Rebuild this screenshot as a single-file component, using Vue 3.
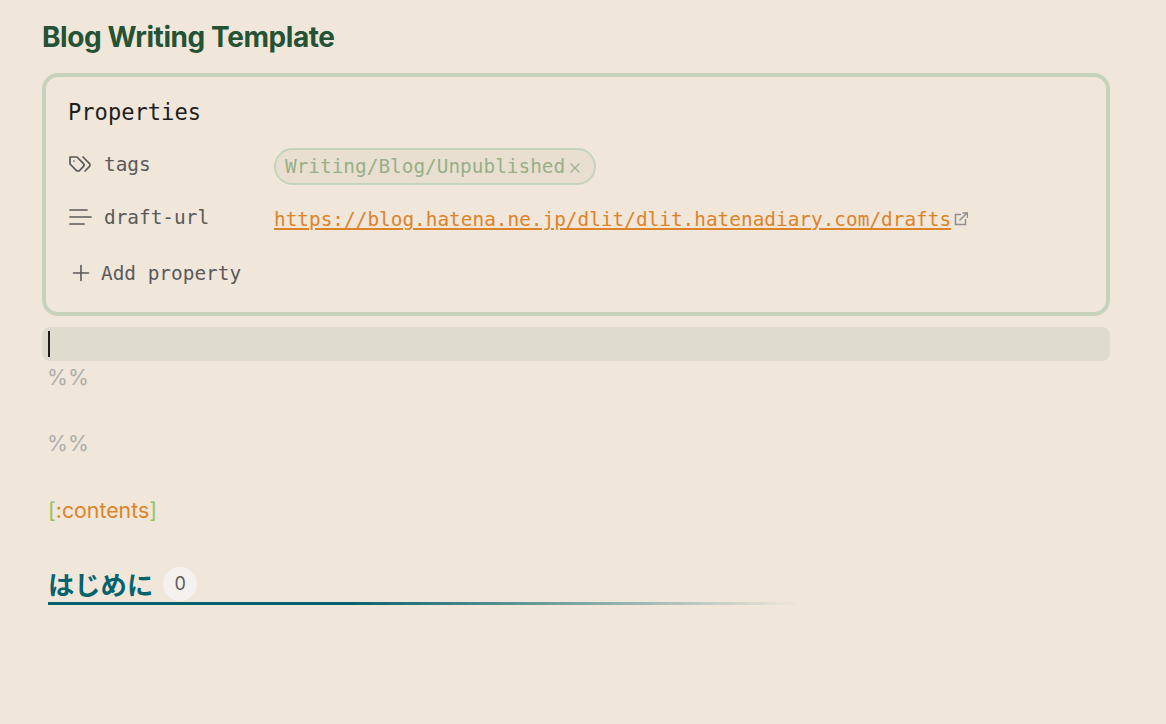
<template>
  <div class="page">
    <h1 class="title">Blog Writing Template</h1>
    <section class="props">
      <div class="props-head">Properties</div>
      <div class="prop">
        <div class="prop-key">
          <svg class="key-icon" viewBox="0 0 24 24" fill="none" stroke="currentColor" stroke-width="1.7" stroke-linecap="round" stroke-linejoin="round">
            <path d="M9 4H2v7l6.29 6.29c.94.94 2.48.94 3.42 0l3.58-3.58c.94-.94.94-2.48 0-3.42L9 4Z" />
            <path d="M6 8.01V8" />
            <path d="m15 4 6.3 6.3a2.4 2.4 0 0 1 0 3.4L17 18" />
          </svg>
          <span>tags</span>
        </div>
        <div class="pill">
          <span>Writing/Blog/Unpublished</span>
          <svg class="pill-x" viewBox="0 0 12 12" fill="none" stroke="currentColor" stroke-width="1.1">
            <path d="M1.5 1.5l9 9M10.5 1.5l-9 9" />
          </svg>
        </div>
      </div>
      <div class="prop">
        <div class="prop-key">
          <svg class="key-icon" viewBox="0 0 24 24" fill="none" stroke="currentColor" stroke-width="1.7" stroke-linecap="round">
            <path d="M2 4h17M2 11h21M2 18h14" />
          </svg>
          <span>draft-url</span>
        </div>
        <a class="url" href="#">https://blog.hatena.ne.jp/dlit/dlit.hatenadiary.com/drafts</a>
        <svg class="ext" viewBox="0 0 14 14" fill="none" stroke="currentColor" stroke-width="1.5">
          <path d="M7 2.5H1.5v10h10V7" />
          <path d="M5.5 8.5 12.5 1.5M8.5 1h5v5" />
        </svg>
      </div>
      <div class="add">
        <svg class="add-icon" viewBox="0 0 18 18" fill="none" stroke="currentColor" stroke-width="1.6" stroke-linecap="round">
          <path d="M9 1.5v15M1.5 9h15" />
        </svg>
        <span>Add property</span>
      </div>
    </section>
    <div class="active-line"><span class="caret"></span></div>
    <div class="line comment">%%</div>
    <div class="line empty"></div>
    <div class="line comment">%%</div>
    <div class="line empty"></div>
    <div class="line"><span class="bracket">[</span><span class="orange">:contents</span><span class="bracket">]</span></div>
    <div class="line empty"></div>
    <div class="heading">
      <span class="heading-text">はじめに</span>
      <span class="badge">0</span>
    </div>
  </div>
</template>

<script setup>
</script>

<style>
body {
  margin: 0;
  background: #f0e6da;
}
</style>

<style scoped>
.page {
  box-sizing: border-box;
  height: 724px;
  padding: 20px 56px 0 42px;
  background: #f0e6da;
  font-family: Inter, "Noto Sans CJK JP", sans-serif;
  overflow: hidden;
}

.title {
  margin: 0;
  font-size: 28px;
  line-height: 34px;
  font-weight: 700;
  letter-spacing: -0.42px;
  color: #245234;
}

.props {
  box-sizing: border-box;
  height: 243px;
  margin-top: 19px;
  padding: 21px 22px 0;
  border: 4px solid #c6d3bb;
  border-radius: 16px;
  font-family: "DejaVu Sans Mono", monospace;
  font-size: 19.4px;
  color: #5a5a5a;
}

.props-head {
  margin-bottom: 14px;
  font-size: 22.1px;
  line-height: 28px;
  color: #1e1e1e;
}

.prop {
  display: flex;
  align-items: center;
  height: 53px;
}

.prop-key {
  display: flex;
  align-items: center;
  gap: 12px;
  width: 206px;
  margin-top: -4px;
  flex: none;
}

.key-icon {
  width: 24px;
  height: 24px;
  flex: none;
}

.pill {
  display: flex;
  align-items: center;
  gap: 4px;
  box-sizing: border-box;
  height: 37px;
  padding: 0 13px 0 9px;
  border: 2px solid #c6d3bb;
  border-radius: 19px;
  background: #e9dfd0;
  color: #98af88;
}

.pill-x {
  width: 12px;
  height: 12px;
  margin-top: 2px;
}

.url {
  color: #dc8429;
  text-decoration: underline;
  text-decoration-thickness: 2px;
  text-underline-offset: 2px;
}

.ext {
  width: 14px;
  height: 14px;
  margin: -2px 0 0 3px;
  color: #8f8f8f;
}

.add {
  display: flex;
  align-items: center;
  gap: 11px;
  height: 54px;
  padding-left: 4px;
}

.add-icon {
  width: 18px;
  height: 18px;
  flex: none;
}

.active-line {
  height: 34px;
  margin-top: 11px;
  padding-left: 6px;
  display: flex;
  align-items: center;
  border-radius: 8px;
  background: #e0dccd;
}

.caret {
  width: 2px;
  height: 26px;
  background: #1e1e1e;
}

.line {
  height: 33.2px;
  padding-left: 6px;
  font-size: 21.3px;
  line-height: 33.2px;
  color: #444;
}

.comment {
  margin-left: -1px;
  color: #aeaeac;
}

.bracket {
  color: #97c45c;
}

.orange {
  color: #dc8429;
}

.heading {
  display: flex;
  align-items: center;
  gap: 10px;
  height: 36px;
  margin: 6px 0 0 6px;
  width: 750px;
  padding-bottom: 3px;
  background: linear-gradient(to right, #05636d 0%, #05636d 40%, rgba(5, 99, 109, 0) 100%) left bottom / 100% 3px no-repeat;
}

.heading-text {
  margin-top: -1px;
  font-size: 26.3px;
  font-weight: 700;
  color: #05636d;
}

.badge {
  display: flex;
  align-items: center;
  justify-content: center;
  width: 34px;
  height: 34px;
  margin-top: -1px;
  border-radius: 50%;
  background: #f5f1ee;
  font-size: 18px;
  color: #5a5a5a;
}
</style>
